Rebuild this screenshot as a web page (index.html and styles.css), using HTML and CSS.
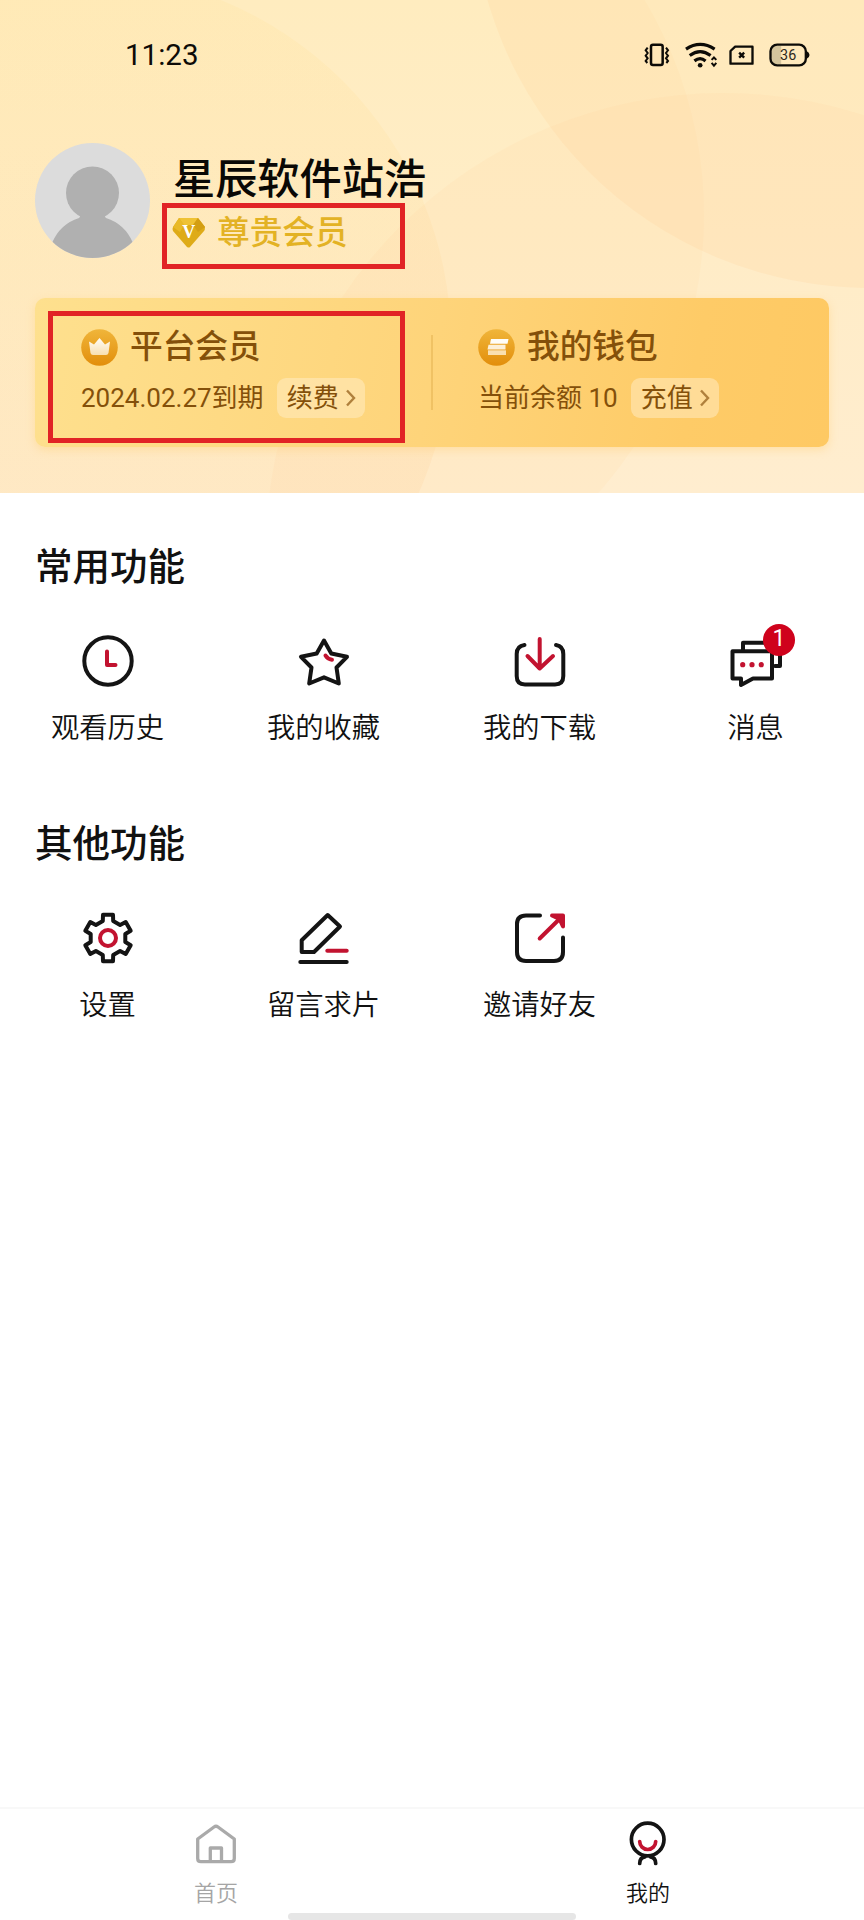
FILE: index.html
```html
<!DOCTYPE html>
<html lang="zh-CN">

<head>
    <meta charset="UTF-8">
    <meta name="viewport" content="width=device-width, initial-scale=1.0">
    <title>我的</title>
    <link rel="stylesheet" href="styles.css">
</head>

<body>
    <!-- Header -->
    <header class="hero">
        <svg class="hero-bg" viewBox="0 0 864 493" preserveAspectRatio="none">
            <defs>
                <linearGradient id="base" x1="0" y1="0" x2="0" y2="1">
                    <stop offset="0" stop-color="#ffefc5" />
                    <stop offset="1" stop-color="#fff1d6" />
                </linearGradient>
                <linearGradient id="left" x1="0" y1="0" x2="0" y2="1">
                    <stop offset="0" stop-color="#ffdc80" stop-opacity=".13" />
                    <stop offset="1" stop-color="#fcc48c" stop-opacity=".17" />
                </linearGradient>
            </defs>
            <rect width="864" height="493" fill="url(#base)" />
            <circle cx="286" cy="215" r="418" fill="#fccb7c" opacity=".08" />
            <circle cx="82" cy="342" r="369" fill="url(#left)" />
            <circle cx="870" cy="-110" r="398" fill="#fcc47c" opacity=".14" />
            <circle cx="723" cy="550" r="457" fill="#fcc57c" opacity=".08" />
        </svg>

        <!-- Status Bar -->
        <div class="status-bar">
            <span class="time">11:23</span>
            <div class="status-icons">
                <svg class="vibrate" width="26" height="24" viewBox="0 0 78 72" fill="none" stroke="#0d0b07">
                    <rect x="21" y="5" width="35" height="61" rx="6" stroke-width="7.5" />
                    <path d="M11 14l-6 8 6 8-6 8 6 8-6 8 5 6M66 14l6 8-6 8 6 8-6 8 6 8-5 6" stroke-width="6" />
                </svg>
                <svg class="wifi" width="33" height="25" viewBox="0 0 98 74" fill="none" stroke="#0d0b07">
                    <path d="M3 18Q45-10 88 18M14 37Q45 14 76 37M28 53Q45 40 61 53" stroke-width="9.5" />
                    <circle cx="45" cy="66" r="7" fill="#0d0b07" stroke="none" />
                    <path d="M79 50l7-7 7 7M79 59l7 8 7-8" stroke-width="6" />
                </svg>
                <svg class="sim" width="25" height="20" viewBox="0 0 74 60" fill="none" stroke="#0d0b07" stroke-linejoin="round">
                    <path d="M4 18L18 5H70V56H4Z" stroke-width="7" />
                    <path d="M30 23l15 15M45 23l-15 15" stroke-width="7" />
                </svg>
                <svg class="battery" width="41" height="24" viewBox="0 0 122 72">
                    <path d="M18 8H36V64H18Q6 60 6 36T18 8Z" fill="#d5c59d" />
                    <rect x="4" y="5" width="106" height="62" rx="20" fill="none" stroke="#0d0b07" stroke-width="7" />
                    <path d="M112 24q9 4 9 12t-9 12z" fill="#0d0b07" />
                    <text x="57" y="52" text-anchor="middle" class="battery-text">36</text>
                </svg>
            </div>
        </div>

        <!-- Profile -->
        <div class="profile">
            <svg class="avatar" viewBox="0 0 115 115">
                <defs>
                    <clipPath id="round">
                        <circle cx="57.5" cy="57.5" r="57.5" />
                    </clipPath>
                </defs>
                <g clip-path="url(#round)">
                    <rect width="115" height="115" fill="#dcdcdc" />
                    <circle cx="57.5" cy="50" r="26.5" fill="#b0b0b0" />
                    <path d="M42 68Q47 73 44 75Q25 81 17 100V115H98V100Q90 81 71 75Q68 73 73 68Z" fill="#b0b0b0" />
                </g>
            </svg>
            <div class="info">
                <div class="name">星辰软件站浩</div>
                <div class="vip">
                    <svg width="34" height="31" viewBox="0 0 34 31">
                        <path d="M7 1H26L33 10Q33 13 32 14L18 30Q17 31 15 30L1 14Q0 12 1 10Z" fill="#deab18" />
                        <path d="M7 1H26L21 8H12Z" fill="#efc235" />
                        <path d="M1 10L7 1 12 8 8 15Z" fill="#e9b928" />
                        <path d="M33 10L26 1 21 8 26 15Z" fill="#d39e13" />
                        <text x="16.8" y="21" text-anchor="middle" class="vip-letter">V</text>
                    </svg>
                    <span>尊贵会员</span>
                </div>
            </div>
            <div class="mark mark-vip"></div>
        </div>

        <!-- Member Card -->
        <div class="member-card">
            <div class="member-item">
                <div class="member-title">
                    <svg width="37" height="37" viewBox="0 0 37 37">
                        <defs>
                            <linearGradient id="coin" x1="0" y1="0" x2="0" y2="1">
                                <stop offset="0" stop-color="#f0b53a" />
                                <stop offset="1" stop-color="#e28e0b" />
                            </linearGradient>
                            <linearGradient id="shine" x1="0" y1="0" x2="0" y2="1">
                                <stop offset="0" stop-color="#fffdf8" />
                                <stop offset="1" stop-color="#f8dfb0" />
                            </linearGradient>
                        </defs>
                        <circle cx="18.5" cy="18.5" r="18.3" fill="url(#coin)" />
                        <path d="M8 12.500L13 15.500 18.500 9 24 15.500 29 12.500 27.500 24Q27 26 25 26H12Q10 26 9.500 24Z" fill="url(#shine)" />
                    </svg>
                    <span>平台会员</span>
                </div>
                <div class="member-sub">
                    <span>2024.02.27到期</span>
                    <a class="pill">续费<svg width="11" height="18" viewBox="0 0 11 18"><path d="M2 1.500L9 9 2 16.500" /></svg></a>
                </div>
                <div class="mark mark-member"></div>
            </div>
            <div class="member-item">
                <div class="member-title">
                    <svg width="37" height="37" viewBox="0 0 37 37">
                        <circle cx="18.5" cy="18.5" r="18.3" fill="url(#coin)" />
                        <path d="M13 10H30.500L29.500 14.700H12Z" fill="#fffdf8" />
                        <path d="M10.500 15.700H27.500V20.500H9.500Z" fill="#fdf0d8" />
                        <path d="M10 21.300H28V26H10Z" fill="#fae0b0" />
                    </svg>
                    <span>我的钱包</span>
                </div>
                <div class="member-sub">
                    <span>当前余额 10</span>
                    <a class="pill">充值<svg width="11" height="18" viewBox="0 0 11 18"><path d="M2 1.500L9 9 2 16.500" /></svg></a>
                </div>
            </div>
        </div>
    </header>

    <main>
        <!-- Common Functions -->
        <section>
            <h2>常用功能</h2>
            <div class="grid">
                <a class="entry">
                    <svg class="icon" viewBox="0 0 56 56">
                        <circle cx="28" cy="28" r="23.700" />
                        <path class="red" d="M27 18.500V32H35.500" />
                    </svg>
                    <span>观看历史</span>
                </a>
                <a class="entry">
                    <svg class="icon" viewBox="0 0 56 56">
                        <path d="M28 7.500L35.300 20.500 51 23.800 40.500 34.500 42.800 50.500 28 44.300 13.200 50.500 15.500 34.500 5 23.800 20.700 20.500Z" />
                        <path class="red" d="M29.500 22.500Q31.500 26 36 26.700" />
                    </svg>
                    <span>我的收藏</span>
                </a>
                <a class="entry">
                    <svg class="icon" viewBox="0 0 56 56">
                        <path d="M12.500 12Q4.700 13 4.700 21V43Q4.700 51.500 13 51.500H43Q51.300 51.500 51.300 43V21Q51.300 13 44 12" />
                        <path class="red" d="M27.700 6V35.500M15.500 23L27.700 35.500 41 23" />
                    </svg>
                    <span>我的下载</span>
                </a>
                <a class="entry">
                    <div class="icon-wrap">
                        <svg class="icon" viewBox="0 0 56 56">
                            <path d="M15 17V9.700H52V33H47" />
                            <path d="M4.500 18.300H44V45.500H25L13 52V45.500H4.500Z" />
                            <g class="dots">
                                <circle cx="14.700" cy="31.700" r="2.600" />
                                <circle cx="24" cy="31.700" r="2.600" />
                                <circle cx="33.300" cy="31.700" r="2.600" />
                            </g>
                        </svg>
                        <span class="badge">1</span>
                    </div>
                    <span>消息</span>
                </a>
            </div>
        </section>

        <!-- Other Functions -->
        <section>
            <h2>其他功能</h2>
            <div class="grid">
                <a class="entry">
                    <svg class="icon" viewBox="-28 -28 56 56">
                        <path d="M-5.200-17L-5-23.300H5L5.200-17 12.100-13 17.700-16 22.700-7.300 17.300-4V4L22.700 7.300 17.700 16 12.100 13 5.200 17 5 23.300H-5L-5.200 17-12.100 13-17.700 16-22.700 7.300-17.300 4V-4L-22.700-7.300-17.700-16-12.100-13Z" />
                        <circle class="red" r="8" />
                    </svg>
                    <span>设置</span>
                </a>
                <a class="entry">
                    <svg class="icon" viewBox="0 0 56 56">
                        <path d="M31.700 5L44 16.500 18 42H5.700V30.300Z" />
                        <path d="M4.300 52H50.700" />
                        <path class="red" d="M31.300 40.700H50.700" />
                    </svg>
                    <span>留言求片</span>
                </a>
                <a class="entry">
                    <svg class="icon" viewBox="0 0 56 56">
                        <path d="M28 5.500H14Q5 5.500 5 14V42Q5 51 14 51H42Q51 51 51 42V27.500" />
                        <path class="red" d="M27.700 28.500L49 7.500" />
                        <path class="red solid" d="M40 5.500H51V16.500L47.500 9Z" />
                    </svg>
                    <span>邀请好友</span>
                </a>
            </div>
        </section>
    </main>

    <!-- Tab Bar -->
    <nav class="tab-bar">
        <a class="tab">
            <svg viewBox="0 0 44 44">
                <path d="M3.700 17L20 5Q22 3.500 24 5L40.300 17V36.500Q40.300 39.700 37 39.700H7Q3.700 39.700 3.700 36.500Z" />
                <path d="M16.300 39V26H27.500V39" />
            </svg>
            <span>首页</span>
        </a>
        <a class="tab active">
            <svg viewBox="0 0 44 44">
                <circle cx="21.700" cy="17.500" r="16.300" />
                <path d="M13.700 41.500Q13.700 35.500 19 34.800M29.700 41.500Q29.700 35.500 24.400 34.800" />
                <path class="red" d="M13.700 19.500A8 8 0 0 0 29.700 19.500" />
            </svg>
            <span>我的</span>
        </a>
        <div class="home-indicator"></div>
    </nav>
</body>

</html>
```
FILE: styles.css
```css
/* Global Styles */
* {
    box-sizing: border-box;
}

body {
    margin: 0;
    min-height: 1920px;
    display: flex;
    flex-direction: column;
    font-family: Roboto, "Noto Sans CJK SC", sans-serif;
    color: #111;
    background-color: #fff;
}

svg {
    display: block;
    flex: none;
    overflow: visible;
}

/* Header */
.hero {
    position: relative;
    height: 493px;
    padding: 0 35px;
}

.hero-bg {
    position: absolute;
    top: 0;
    left: 0;
    width: 100%;
    height: 100%;
    overflow: hidden;
    z-index: -1;
}

/* Status Bar */
.status-bar {
    display: flex;
    justify-content: space-between;
    align-items: center;
    height: 110px;
    padding: 0 19px 0 90px;
}

.time {
    font-size: 29.5px;
    color: #0d0b07;
}

.status-icons {
    display: flex;
    align-items: center;
    gap: 15px;
}

.sim {
    margin-left: -4px;
}

.battery-text {
    font-size: 43px;
    font-weight: 400;
    fill: #2d281c;
}

/* Profile */
.profile {
    position: relative;
    display: flex;
    align-items: flex-end;
    gap: 23px;
    margin-top: 33px;
}

.avatar {
    width: 115px;
    height: 115px;
}

.name {
    font-size: 42.2px;
    font-weight: 500;
    line-height: 52px;
    color: #0a0805;
}

.vip {
    display: flex;
    align-items: center;
    gap: 11px;
    margin-left: -1px;
    font-size: 32.7px;
    font-weight: 500;
    line-height: 52px;
    color: #e3b224;
}

.vip span {
    padding-top: 3px;
    line-height: 49px;
}

.vip-letter {
    font-family: "Liberation Serif", serif;
    font-size: 18px;
    font-weight: bold;
    fill: #fff;
}

/* Red outlines */
.mark {
    position: absolute;
    border: 5px solid #e12325;
}

.mark-vip {
    left: 127px;
    top: 60px;
    width: 243px;
    height: 66px;
}

.mark-member {
    left: 13px;
    top: 13px;
    width: 357px;
    height: 132px;
}

/* Member Card */
.member-card {
    display: flex;
    height: 149px;
    margin-top: 40px;
    border-radius: 10px;
    background: linear-gradient(100deg, #fee08e, #fed47a 50%, #fecb67 82%, #fec963);
    box-shadow: 0 3px 8px rgba(254, 205, 110, 0.4);
}

.member-item {
    position: relative;
    flex: 1;
    padding: 27px 0 0 46px;
    color: #84500a;
}

.member-item + .member-item::before {
    content: '';
    position: absolute;
    left: -1px;
    top: 37px;
    width: 2px;
    height: 75px;
    background: rgba(216, 160, 60, 0.35);
}

.member-title {
    display: flex;
    align-items: center;
    gap: 12px;
    height: 44px;
    font-size: 32.7px;
    font-weight: 500;
    line-height: 44px;
}

.member-sub {
    display: flex;
    align-items: center;
    gap: 14px;
    height: 40px;
    margin-top: 9px;
    font-size: 26px;
    line-height: 38px;
    white-space: nowrap;
}

.pill {
    display: flex;
    align-items: center;
    gap: 6px;
    height: 40px;
    margin-left: -1px;
    padding: 0 9px 0 10px;
    border-radius: 9px;
    background: rgba(255, 238, 200, 0.5);
}

.pill path {
    fill: none;
    stroke: #b0803c;
    stroke-width: 2.4;
}

/* Function Sections */
main {
    flex: 1;
    padding-top: 49px;
}

section {
    margin-bottom: 70px;
}

h2 {
    margin: 0 0 41px 35px;
    font-size: 37.5px;
    font-weight: 500;
    line-height: 50px;
}

.grid {
    display: grid;
    grid-template-columns: repeat(4, 1fr);
}

section + section {
    padding-top: 1px;
    margin-top: -1px;
}

.entry {
    display: flex;
    flex-direction: column;
    align-items: center;
    gap: 20px;
    font-size: 28.3px;
    font-weight: 350;
    line-height: 40px;
}

.entry > span {
    margin-left: -1px;
}

.icon-wrap {
    position: relative;
}

.icon {
    width: 56px;
    height: 56px;
}

.icon path,
.icon circle,
.tab path,
.tab circle {
    fill: none;
    stroke: #141414;
    stroke-width: 4;
    stroke-linecap: round;
    stroke-linejoin: round;
}

.icon .red,
.tab .red {
    stroke: #c21330;
}

.icon .solid {
    fill: #c21330;
}

.icon .dots circle {
    fill: #c21330;
    stroke: none;
}

.badge {
    position: absolute;
    left: 35px;
    top: -9px;
    width: 32px;
    height: 32px;
    border-radius: 50%;
    background: #cf021c;
    color: #fff;
    font-size: 23px;
    font-weight: 400;
    line-height: 30px;
    text-align: center;
}

/* Tab Bar */
.tab-bar {
    position: relative;
    display: flex;
    height: 113px;
    border-top: 2px solid #f8f8f8;
}

.tab {
    flex: 1;
    display: flex;
    flex-direction: column;
    align-items: center;
    gap: 12px;
    padding-top: 13px;
    font-size: 22px;
    font-weight: 350;
    line-height: 32px;
    color: #a5a5a5;
}

.tab svg {
    width: 44px;
    height: 44px;
}

.tab path {
    stroke: #aaa;
    stroke-width: 3.3;
}

.tab.active {
    color: #111;
}

.tab.active path,
.tab.active circle {
    stroke: #141414;
    stroke-width: 3.7;
}

.tab.active .red {
    stroke: #c21330;
}

.home-indicator {
    position: absolute;
    left: 288px;
    bottom: 0;
    width: 288px;
    height: 7px;
    border-radius: 4px;
    background: #e6e6e6;
}
```
